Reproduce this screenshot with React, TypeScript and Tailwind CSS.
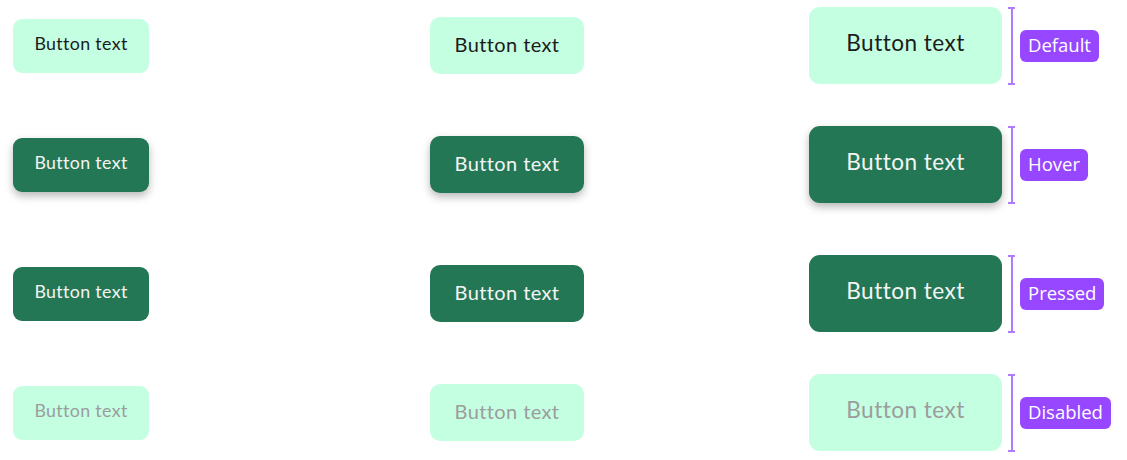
type State = 'default' | 'hover' | 'pressed' | 'disabled';

const rows: { state: State; label: string; gap: string }[] = [
  { state: 'default', label: 'Default', gap: 'mt-[7px]' },
  { state: 'hover', label: 'Hover', gap: 'mt-[42px]' },
  { state: 'pressed', label: 'Pressed', gap: 'mt-[52px]' },
  { state: 'disabled', label: 'Disabled', gap: 'mt-[42px]' },
];

const stateClass: Record<State, string> = {
  default: 'bg-[#c4ffe2] text-[#1c1c1c]',
  hover: 'bg-[#247754] text-[#f4f4f4] shadow-[0_4px_8px_rgba(0,0,0,0.28)]',
  pressed: 'bg-[#247754] text-[#f4f4f4]',
  disabled: 'bg-[#c4ffe2] text-[#9c9c9c]',
};

function Btn({ state, size }: { state: State; size: 'sm' | 'md' | 'lg' }) {
  const sizeClass =
    size === 'sm'
      ? 'w-[136px] h-[54px] rounded-[9px] text-[17.8px] pb-[4px]'
      : size === 'md'
        ? 'w-[154px] h-[57px] rounded-[10px] text-[20px] pb-[4px]'
        : 'w-[193px] h-[77px] rounded-[11px] text-[22.6px] pb-[5px]';
  return (
    <button
      className={`${sizeClass} ${stateClass[state]} flex items-center justify-center tracking-[0.02em]`}
      style={{ fontFamily: 'Lato, "Noto Sans", sans-serif' }}
    >
      Button text
    </button>
  );
}

function Bracket() {
  return (
    <div className="flex h-[78px] w-[7px] flex-col items-center">
      <div className="h-[2px] w-[7px] bg-[#b07cff]" />
      <div className="w-[2px] flex-1 bg-[#b07cff]" />
      <div className="h-[2px] w-[7px] bg-[#b07cff]" />
    </div>
  );
}

export default function App() {
  return (
    <div className="h-[460px] w-[1127px] overflow-hidden bg-white">
      {rows.map((r) => (
        <div key={r.state} className={`${r.gap} flex h-[77px] items-center pl-[13px]`}>
          <Btn state={r.state} size="sm" />
          <div className="ml-[281px]">
            <Btn state={r.state} size="md" />
          </div>
          <div className="ml-[225px]">
            <Btn state={r.state} size="lg" />
          </div>
          <div className="ml-[6px]">
            <Bracket />
          </div>
          <span
            className="ml-[5px] flex h-[32px] items-center rounded-[6px] bg-[#9747ff] px-[8px] pb-[1px] text-[18.5px] text-white"
            style={{ fontFamily: '"Open Sans", "Noto Sans", sans-serif' }}
          >
            {r.label}
          </span>
        </div>
      ))}
    </div>
  );
}
